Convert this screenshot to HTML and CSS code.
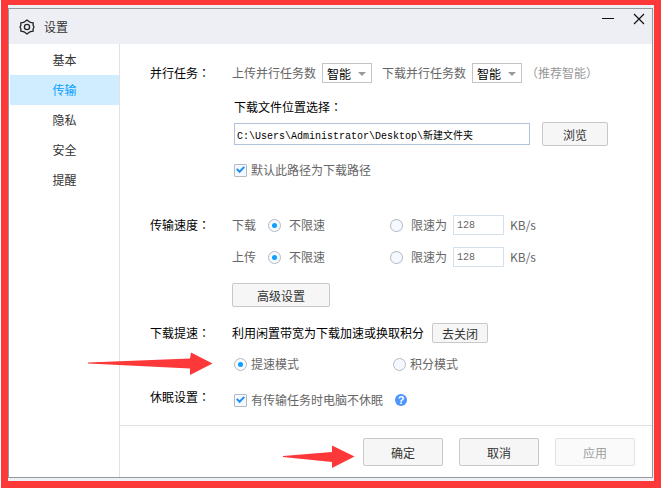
FILE: index.html
```html
<!DOCTYPE html>
<html lang="zh-CN">
<head>
    <meta charset="UTF-8">
    <meta name="viewport" content="width=device-width, initial-scale=1.0">
    <title>设置</title>
    <link rel="stylesheet" href="styles.css">
</head>
<body>
    <div class="frame">
        <div class="window">
            <header class="titlebar">
                <svg class="gear" width="16" height="16" viewBox="0 0 16 16" fill="none" stroke="#222" stroke-width="1.3" stroke-linejoin="round">
                    <path d="M6 2.6 L8 1 L10 2.6 L11.6 3.3 L14.2 3.8 L14.1 6.3 L15 8 L14.1 9.7 L14.2 12.2 L11.6 12.7 L10 13.4 L8 15 L6 13.4 L4.4 12.7 L1.8 12.2 L1.9 9.7 L1 8 L1.9 6.3 L1.8 3.8 L4.4 3.3 Z"/>
                    <circle cx="8" cy="8" r="2.6"/>
                </svg>
                <h1>设置</h1>
                <button type="button" class="win-btn" aria-label="最小化">
                    <svg width="12" height="12" viewBox="0 0 12 12"><path d="M0 5.5H12" stroke="#111" stroke-width="1"/></svg>
                </button>
                <button type="button" class="win-btn" aria-label="关闭">
                    <svg width="12" height="12" viewBox="0 0 12 12"><path d="M1 1L11 11M11 1L1 11" stroke="#111" stroke-width="1.2"/></svg>
                </button>
            </header>

            <div class="body">
                <nav class="sidebar">
                    <a href="#">基本</a>
                    <a href="#" class="active">传输</a>
                    <a href="#">隐私</a>
                    <a href="#">安全</a>
                    <a href="#">提醒</a>
                </nav>

                <form class="main">
                    <div class="settings">
                        <section class="group">
                            <h2>并行任务<span class="punct" lang="zh-TW">：</span></h2>
                            <div class="content">
                                <div class="row tasks">
                                    <label for="upTasks">上传并行任务数</label>
                                    <span class="select"><select id="upTasks"><option>智能</option></select></span>
                                    <label for="downTasks" class="second">下载并行任务数</label>
                                    <span class="select"><select id="downTasks"><option>智能</option></select></span>
                                    <span class="hint"><span class="punct" lang="zh-TW">（</span>推荐智能<span class="punct" lang="zh-TW">）</span></span>
                                </div>
                                <div class="row indent path-label">
                                    <label for="path" class="dark">下载文件位置选择<span class="punct" lang="zh-TW">：</span></label>
                                </div>
                                <div class="row indent path-row">
                                    <input type="text" id="path" class="path" value="C:\Users\Administrator\Desktop\新建文件夹">
                                    <button type="button" class="btn browse">浏览</button>
                                </div>
                                <div class="row indent default-row">
                                    <label class="option"><input type="checkbox" checked>默认此路径为下载路径</label>
                                </div>
                            </div>
                        </section>

                        <section class="group speed">
                            <h2>传输速度<span class="punct" lang="zh-TW">：</span></h2>
                            <div class="content">
                                <div class="row speed-row">
                                    <span>下载</span>
                                    <label class="option wide"><input type="radio" name="down" checked>不限速</label>
                                    <label class="option wide"><input type="radio" name="down">限速为</label>
                                    <input type="text" class="limit" value="128" aria-label="下载限速">
                                    <span class="unit">KB/s</span>
                                </div>
                                <div class="row speed-row">
                                    <span>上传</span>
                                    <label class="option wide"><input type="radio" name="up" checked>不限速</label>
                                    <label class="option wide"><input type="radio" name="up">限速为</label>
                                    <input type="text" class="limit" value="128" aria-label="上传限速">
                                    <span class="unit">KB/s</span>
                                </div>
                                <button type="button" class="btn advanced">高级设置</button>
                            </div>
                        </section>

                        <section class="group boost">
                            <h2>下载提速<span class="punct" lang="zh-TW">：</span></h2>
                            <div class="content">
                                <div class="row">
                                    <span class="dark">利用闲置带宽为下载加速或换取积分</span>
                                    <button type="button" class="btn small">去关闭</button>
                                </div>
                                <div class="row indent modes">
                                    <label class="option"><input type="radio" name="mode" checked>提速模式</label>
                                    <label class="option"><input type="radio" name="mode">积分模式</label>
                                </div>
                            </div>
                        </section>

                        <section class="group sleep">
                            <h2>休眠设置<span class="punct" lang="zh-TW">：</span></h2>
                            <div class="content">
                                <div class="row indent sleep-row">
                                    <label class="option"><input type="checkbox" checked>有传输任务时电脑不休眠</label>
                                    <span class="help">?</span>
                                </div>
                            </div>
                        </section>
                    </div>

                    <footer class="footer">
                        <button type="button" class="btn">确定</button>
                        <button type="button" class="btn">取消</button>
                        <button type="button" class="btn" disabled>应用</button>
                    </footer>
                </form>
            </div>

            <!-- red pointers -->
            <svg class="arrow arrow-mode" width="126" height="24" viewBox="0 0 126 24"><path d="M0 10.5 L102 6.5 L103 0.5 L124.5 11.5 L102 23 L102 16.5 L0 11.5 Z" fill="#fd3838"/></svg>
            <svg class="arrow arrow-ok" width="73" height="24" viewBox="0 0 73 24"><path d="M0 11 L49 7 L49 0.5 L71.5 11.5 L49 23 L49 17 L0 12 Z" fill="#fd3838"/></svg>
        </div>
    </div>
</body>
</html>
```
FILE: styles.css
```css
* {
    box-sizing: border-box;
}
body {
    margin: 0;
    background-color: #fff;
    color: #666;
    font-family: "Noto Sans CJK SC", sans-serif;
    font-size: 12px;
    line-height: 20px;
}
h1, h2 {
    margin: 0;
    font-size: 12px;
    font-weight: normal;
}
button, input, select {
    margin: 0;
    font-family: inherit;
    font-size: 12px;
}
.frame {
    display: flex;
    min-height: calc(100vh - 1px);
    margin: 0 1px 1px;
    padding: 3px 1px 3px 0;
    border: 7px solid #fd3838;
    border-top-width: 5px;
    background-color: #edf1f6;
}
.window {
    position: relative;
    display: flex;
    flex-direction: column;
    flex: 1;
    border: 1px solid #96989c;
    background-color: #fff;
}

/* title bar */
.titlebar {
    display: flex;
    align-items: center;
    height: 35px;
    padding: 0 7px 0 10px;
    background-color: #eeeff5;
}
.titlebar h1 {
    flex: 1;
    margin-left: 9px;
    color: #333;
}
.win-btn {
    display: flex;
    align-self: flex-start;
    margin-top: 4px;
    margin-left: 19px;
    padding: 0;
    border: none;
    background: none;
}

.body {
    display: flex;
    flex: 1;
}
.sidebar {
    width: 111px;
    padding: 1px 0 0 1px;
    border-right: 1px solid #e2e2e2;
}
.sidebar a {
    display: block;
    line-height: 30px;
    text-align: center;
    color: #333;
    text-decoration: none;
}
.sidebar .active {
    background-color: #d0ecff;
    color: #0a9fff;
}

.main {
    display: flex;
    flex-direction: column;
    flex: 1;
}
.settings {
    flex: 1;
    padding: 19px 17px 14px 30px;
}
.group {
    display: grid;
    grid-template-columns: 82px 1fr;
}
.group h2, .dark {
    color: #000;
}
.punct {
    font-family: "Noto Sans CJK TC", sans-serif;
}
.row {
    display: flex;
    align-items: center;
    min-height: 20px;
    white-space: nowrap;
}
.indent {
    padding-left: 2px;
}

.select {
    position: relative;
    display: flex;
    margin-left: 6px;
}
.select::after {
    content: "";
    position: absolute;
    top: 9px;
    right: 6px;
    border: 4px solid transparent;
    border-top-color: #999;
    border-bottom: none;
    pointer-events: none;
}
select {
    appearance: none;
    width: 50px;
    height: 20px;
    padding: 0 4px;
    border: 1px solid #c4c4c4;
    border-radius: 0;
    background-color: #fff;
    color: #000;
}
.second {
    margin-left: 10px;
}
.hint {
    margin-left: 4px;
    color: #999;
}

.path-label {
    margin-top: 14px;
}
.path-row {
    gap: 12px;
    margin-top: 5px;
}
.path {
    width: 296px;
    height: 22px;
    padding: 0 2px;
    border: 1px solid #b2c3da;
    color: #000;
    font-family: "Liberation Mono", "Noto Sans CJK SC", monospace;
    font-size: 10px;
}
.default-row {
    margin-top: 14px;
}

.btn {
    height: 24px;
    padding: 0;
    border: 1px solid #c8c8c8;
    border-radius: 2px;
    background-color: #f6f6f6;
    color: #333;
}
.btn:disabled {
    border-color: #e2e2e2;
    background-color: #fafafa;
    color: #a0a0a0;
}
.browse {
    width: 66px;
}

/* check boxes and radios */
.option {
    display: flex;
    align-items: center;
    gap: 4px;
}
.wide {
    gap: 8px;
}
input[type="checkbox"], input[type="radio"] {
    appearance: none;
    display: grid;
    place-items: center;
    width: 13px;
    height: 13px;
    border: 1px solid #b4bac2;
    background-color: #f5f9ff;
}
input[type="checkbox"] {
    border-radius: 1px;
}
input[type="radio"] {
    border-radius: 50%;
}
input[type="checkbox"]:checked::before {
    content: "";
    width: 9px;
    height: 8px;
    background-color: #1e90f5;
    clip-path: polygon(0 45%, 16% 28%, 40% 52%, 84% 2%, 100% 20%, 40% 92%);
}
input[type="radio"]:checked::before {
    content: "";
    width: 5px;
    height: 5px;
    border-radius: 50%;
    background-color: #0a9fff;
}

.speed {
    margin-top: 35px;
}
.speed-row {
    display: grid;
    grid-template-columns: 30px 116px 57px 51px auto;
    gap: 0 6px;
}
.speed-row + .speed-row {
    margin-top: 12px;
}
.limit {
    width: 51px;
    height: 20px;
    padding: 0 3px;
    border: 1px solid #d5e0ed;
    color: #666;
    font-family: "Liberation Mono", monospace;
    font-size: 10px;
}
.advanced {
    width: 98px;
    margin-top: 16px;
}

.boost {
    margin-top: 16px;
}
.small {
    width: 56px;
    height: 20px;
    margin-left: 8px;
}
.modes {
    display: grid;
    grid-template-columns: 159px auto;
    justify-content: start;
    margin-top: 11px;
}
.sleep {
    margin-top: 13px;
}
.sleep-row {
    gap: 12px;
    padding-top: 3px;
}
.help {
    width: 12px;
    height: 12px;
    border-radius: 50%;
    background-color: #4d94ff;
    color: #fff;
    font-family: "Liberation Sans", sans-serif;
    font-size: 11px;
    font-weight: bold;
    line-height: 12px;
    text-align: center;
}

.footer {
    display: flex;
    justify-content: flex-end;
    gap: 16px;
    padding: 12px 17px 11px;
    border-top: 1px solid #e2e2e2;
}
.footer .btn {
    width: 80px;
    height: 28px;
}

.arrow {
    position: absolute;
    pointer-events: none;
}
.arrow-mode {
    left: 79px;
    top: 343px;
}
.arrow-ok {
    left: 274px;
    top: 436px;
}
```
